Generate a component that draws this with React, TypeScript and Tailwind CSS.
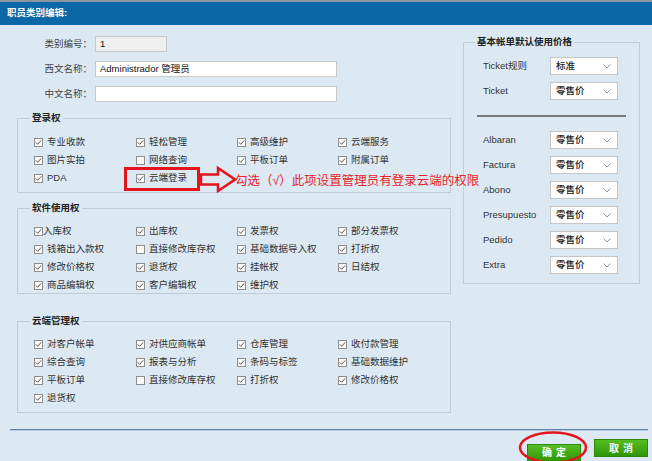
import React from "react";

type Item = { label: string; checked: boolean; tight?: boolean; mark?: boolean };

function Box({ checked }: { checked: boolean }) {
  return (
    <span className="inline-flex w-[9px] h-[9px] border border-[#8e8e8e] bg-[#fafafa] items-center justify-center shrink-0">
      {checked && (
        <svg width="7" height="7" viewBox="0 0 7 7">
          <path d="M0.8 3.4 L2.7 5.3 L6.2 1.4" stroke="#555" strokeWidth="1" fill="none" />
        </svg>
      )}
    </span>
  );
}

function Check({ item }: { item: Item }) {
  return (
    <div className={"relative flex items-center h-[16px] " + (item.tight ? "gap-0" : "gap-[4px]")}>
      <Box checked={item.checked} />
      <span className="text-[9.5px] text-[#333] leading-[16px] whitespace-nowrap">{item.label}</span>
      {item.mark && (
        <>
          <div className="absolute left-[-12px] top-[-3px] w-[76px] h-[24px] border-[3px] border-[#e3141c]" />
          <svg className="absolute left-[63px] top-[-4px]" width="38" height="27" viewBox="0 0 38 27">
            <path d="M2 8.5 H19 V2 L36 13.5 L19 25 V18.5 H2 Z" stroke="#e3141c" strokeWidth="2.5" fill="none" strokeLinejoin="miter" />
          </svg>
          <span className="absolute left-[99px] top-[3px] text-[12.5px] leading-[16px] text-[#e8222b] whitespace-nowrap">
            勾选（√）此项设置管理员有登录云端的权限
          </span>
        </>
      )}
    </div>
  );
}

function Group({ title, items, cls }: { title: string; items: Item[]; cls: string }) {
  return (
    <fieldset className={"border border-[#c3ccd5] px-0 " + cls}>
      <legend className="ml-[12px] px-[2px] font-bold text-[9.5px] leading-[12px] text-[#222]">{title}</legend>
      <div className="grid grid-cols-[102px_101px_101px_1fr] gap-y-[2px] pl-[16px]">
        {items.map((it, i) => (
          <Check key={i} item={it} />
        ))}
      </div>
    </fieldset>
  );
}

function Select({ value }: { value: string }) {
  return (
    <div className="w-[68px] h-[18px] bg-white border border-[#c6c6c6] flex items-center justify-between pl-[5px] pr-[6px]">
      <span className="text-[9.5px] text-[#222] font-medium">{value}</span>
      <svg width="8" height="5" viewBox="0 0 8 5">
        <path d="M0.5 0.5 L4 4 L7.5 0.5" stroke="#8a8a8a" strokeWidth="0.9" fill="none" />
      </svg>
    </div>
  );
}

function PriceRow({ label, value }: { label: string; value: string }) {
  return (
    <div className="flex items-center h-[18px]">
      <span className="w-[67px] text-[9.5px] text-[#333]">{label}</span>
      <Select value={value} />
    </div>
  );
}

const login: Item[] = [
  { label: "专业收款", checked: true },
  { label: "轻松管理", checked: true },
  { label: "高级维护", checked: true },
  { label: "云端服务", checked: true },
  { label: "图片实拍", checked: true },
  { label: "网络查询", checked: false },
  { label: "平板订单", checked: true },
  { label: "附属订单", checked: true },
  { label: "PDA", checked: true },
  { label: "云端登录", checked: true, mark: true },
];

const software: Item[] = [
  { label: "入库权", checked: true, tight: true },
  { label: "出库权", checked: true },
  { label: "发票权", checked: true },
  { label: "部分发票权", checked: true },
  { label: "钱箱出入款权", checked: true },
  { label: "直接修改库存权", checked: false },
  { label: "基础数据导入权", checked: true },
  { label: "打折权", checked: true },
  { label: "修改价格权", checked: true },
  { label: "退货权", checked: true },
  { label: "挂帐权", checked: true },
  { label: "日结权", checked: true },
  { label: "商品编辑权", checked: true },
  { label: "客户编辑权", checked: true },
  { label: "维护权", checked: true },
];

const cloud: Item[] = [
  { label: "对客户帐单", checked: true },
  { label: "对供应商帐单", checked: true },
  { label: "仓库管理", checked: true },
  { label: "收付款管理", checked: true },
  { label: "综合查询", checked: true },
  { label: "报表与分析", checked: true },
  { label: "条码与标签", checked: true },
  { label: "基础数据维护", checked: true },
  { label: "平板订单", checked: true },
  { label: "直接修改库存权", checked: false },
  { label: "打折权", checked: true },
  { label: "修改价格权", checked: true },
  { label: "退货权", checked: true },
];

export default function App() {
  return (
    <div className="w-[652px] h-[461px] bg-[#dde9f2] flex flex-col overflow-hidden font-['Liberation_Sans','Noto_Sans_CJK_SC',sans-serif]">
      <div className="h-[25px] border-t-2 border-[#8c959e] bg-[#0b67a6] flex items-center pl-[7px] shrink-0">
        <span className="text-white font-bold text-[9.5px]">职员类别编辑:</span>
      </div>

      <div className="flex pl-[17px] gap-[12px]">
        <div className="w-[434px] flex flex-col pt-[11px]">
          <div className="flex flex-col gap-[9px]">
            <div className="flex items-center h-[16px]">
              <span className="w-[75px] text-right text-[9.5px] text-[#444]">类别编号：</span>
              <div className="ml-[3px] w-[72px] h-[16px] bg-[#efefef] border border-[#c9c9c9] flex items-center pl-[4px] text-[9.5px] text-[#111]">1</div>
            </div>
            <div className="flex items-center h-[16px]">
              <span className="w-[75px] text-right text-[9.5px] text-[#444]">西文名称：</span>
              <div className="ml-[3px] w-[242px] h-[16px] bg-white border border-[#c9c9c9] flex items-center pl-[4px] text-[9.5px] text-[#111]">Administrador 管理员</div>
            </div>
            <div className="flex items-center h-[16px]">
              <span className="w-[75px] text-right text-[9.5px] text-[#444]">中文名称：</span>
              <div className="ml-[3px] w-[242px] h-[16px] bg-white border border-[#c9c9c9]" />
            </div>
          </div>

          <Group title="登录权" items={login} cls="mt-[10px] pt-[10px] pb-[6px]" />
          <Group title="软件使用权" items={software} cls="mt-[9px] pt-[9px] pb-[0px]" />
          <Group title="云端管理权" items={cloud} cls="mt-[21px] pt-[9px] pb-[6px]" />
        </div>

        <div className="w-[177px] pt-[11px]">
          <fieldset className="border border-[#c3ccd5] px-0 pt-[9px] pb-[9px]">
            <legend className="ml-[11px] px-[2px] font-bold text-[9.5px] leading-[12px] text-[#222]">基本帐单默认使用价格</legend>
            <div className="flex flex-col gap-[7px] pl-[19px]">
              <PriceRow label="Ticket规则" value="标准" />
              <PriceRow label="Ticket" value="零售价" />
            </div>
            <div className="mx-[13px] mt-[15px] h-[2px] bg-[#777]" />
            <div className="flex flex-col gap-[7px] pl-[19px] mt-[14px]">
              {["Albaran", "Factura", "Abono", "Presupuesto", "Pedido", "Extra"].map((l) => (
                <PriceRow key={l} label={l} value="零售价" />
              ))}
            </div>
          </fieldset>
        </div>
      </div>

      <div className="mt-[16px] ml-[10px] mr-[4px]">
        <div className="h-[1px] bg-[#5f83a8]" />
        <div className="h-[1px] bg-[#b9ccdd]" />
      </div>

      <div className="flex justify-end gap-[13px] pr-[4px] mt-[8px]">
        <div className="relative">
          <button className="w-[54px] h-[18px] bg-gradient-to-b from-[#56be22] to-[#2f9608] border border-[#2b8a05] text-white font-bold text-[10px] tracking-[4px] pl-[4px]">
            确定
          </button>
          <svg className="absolute left-[-9px] top-[-8px]" width="70" height="33" viewBox="0 0 70 33">
            <ellipse cx="35" cy="16.5" rx="33" ry="15" stroke="#e3141c" strokeWidth="2.5" fill="none" />
          </svg>
        </div>
        <button className="w-[54px] h-[18px] bg-gradient-to-b from-[#56be22] to-[#2f9608] border border-[#2b8a05] text-white font-bold text-[10px] tracking-[4px] pl-[4px]">
          取消
        </button>
      </div>
    </div>
  );
}
